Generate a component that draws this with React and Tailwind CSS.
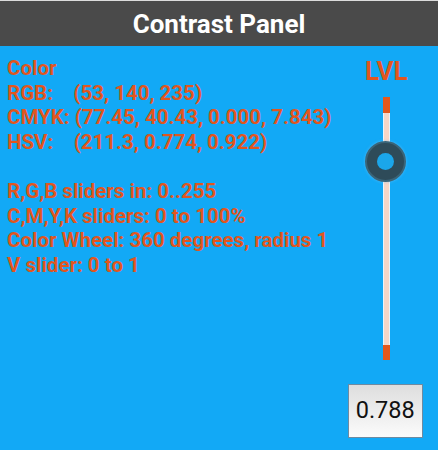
import React from "react";

const lines = [
	"Color",
	"RGB:    (53, 140, 235)",
	"CMYK: (77.45, 40.43, 0.000, 7.843)",
	"HSV:    (211.3, 0.774, 0.922)",
	"",
	"R,G,B sliders in: 0..255",
	"C,M,Y,K sliders: 0 to 100%",
	"Color Wheel: 360 degrees, radius 1",
	"V slider: 0 to 1",
];

const LevelSlider = ({ value }) => {
	// thumb position from the top of the track
	const pct = 1 - value;
	return (
		<div className="relative flex flex-col items-center w-[42px]">
			<div className="w-[7px] h-[16px] bg-[#e4581d]" />
			<div className="w-[7px] h-[232px] bg-[#f7d6c6] border-x border-[#e9f4fb]" />
			<div className="w-[7px] h-[15px] bg-[#e4581d]" />
			<div
				className="absolute left-0 w-[41px] h-[41px] rounded-full bg-[#2e4b59] border-2 border-[#3a6579] flex items-center justify-center shadow-[0_0_3px_rgba(120,200,255,0.6)]"
				style={{ top: `${16 + pct * 232 - 21}px` }}
			>
				<div className="w-[17px] h-[17px] rounded-full bg-[#1ba6ea]" />
			</div>
		</div>
	);
};

export default function App() {
	return (
		<div className="w-[438px] h-[450px] flex flex-col font-['Roboto',sans-serif] bg-[#12a9f6]">
			<div className="h-[46px] bg-[#4a4a4a] flex items-center justify-center border-t border-[#dcdcdc]">
				<h1 className="text-white font-bold text-[26px] leading-none">Contrast Panel</h1>
			</div>
			<div className="flex-1 flex">
				<div className="flex-1 pl-[7px] pt-[10px]">
					{lines.map((l, i) => (
						<div key={i} className="text-[#e1561e] font-bold text-[20.5px] leading-[24.6px] h-[24.6px] whitespace-pre">
							{l}
						</div>
					))}
				</div>
				<div className="w-[110px] flex flex-col items-center pt-[10px] pl-[3px]">
					<div className="text-[#e1561e] font-bold text-[26px] leading-[30px]">LVL</div>
					<div className="mt-[11px]">
						<LevelSlider value={0.788} />
					</div>
					<div className="mt-[24px] ml-[-2px] w-[75px] h-[54px] border border-[#6f8aa0] bg-gradient-to-b from-[#dedede] to-[#fbfbfb] flex items-center justify-center text-[23.5px] text-[#111]">
						0.788
					</div>
				</div>
			</div>
		</div>
	);
}
